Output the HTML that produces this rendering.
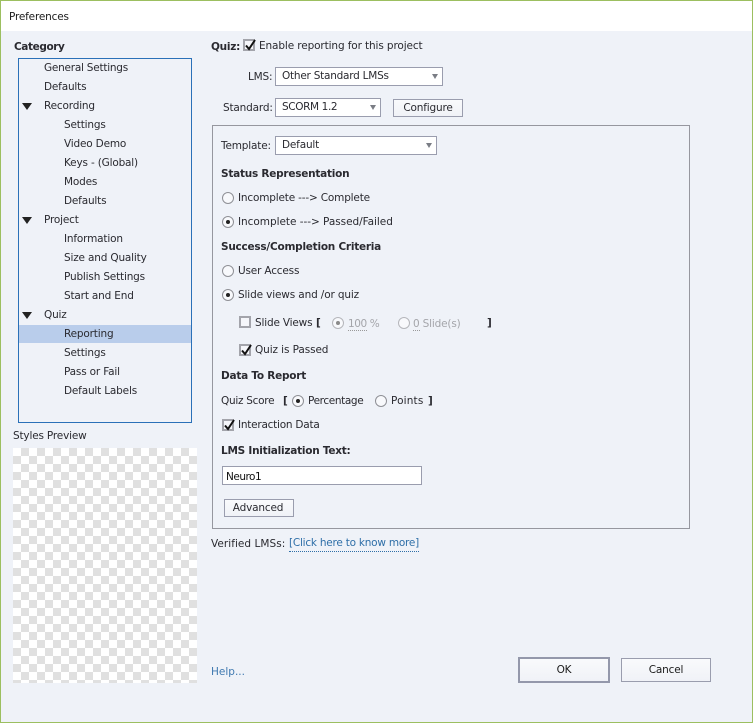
<!DOCTYPE html>
<html><head><meta charset="utf-8"><style>
html,body{margin:0;padding:0}
body{width:753px;height:723px;overflow:hidden;position:relative;background:#eff2f8;font-family:"DejaVu Sans",sans-serif;font-size:10.5px;color:#2a2a30}
.t{position:absolute;white-space:nowrap;line-height:14px;letter-spacing:-.18px;margin-top:1px}
.b{font-weight:bold;letter-spacing:-.24px}
.box{position:absolute;box-sizing:border-box}
.dd{position:absolute;box-sizing:border-box;background:#fff;border:1px solid #9a9dae;height:19px}
.dd:after{content:"";position:absolute;right:4px;top:6px;border-left:3.5px solid transparent;border-right:3.5px solid transparent;border-top:5px solid #7a7d85}
.dd.noa:after{display:none}
.btn{position:absolute;box-sizing:border-box;border:1px solid #9a9dae;background:linear-gradient(#f9fafc,#f0f2f7);text-align:center;letter-spacing:-.18px}
.cb{position:absolute;width:12px;height:12px;box-sizing:border-box;border:2px solid #a3a4ab;background:#f5f6fa}
.cb svg{position:absolute;left:-2px;top:-4px}
.r{position:absolute;width:12px;height:12px;box-sizing:border-box;border:1px solid #8f9096;border-radius:50%;background:#f8f9fc}
.r.on:after{content:"";position:absolute;left:3px;top:3px;width:4px;height:4px;border-radius:50%;background:#222}
.r.dis{border-color:#b5b6bb}
.r.dis.on:after{background:#8a8a8a}
.tri{position:absolute;border-left:5px solid transparent;border-right:5px solid transparent;border-top:7px solid #222;left:22px}
.g{color:#a4a5aa}
</style></head><body>
<div class="box" style="left:0;top:0;width:753px;height:31px;background:#fff"></div>
<div class="box" style="left:0;top:0;width:753px;height:723px;border:1px solid #9cbf60"></div>
<div class="t" style="left:9px;top:9px;color:#1a1a1a">Preferences</div>

<div class="t b" style="left:14px;top:39px;letter-spacing:-.4px">Category</div>
<div class="box" style="left:18px;top:58px;width:174px;height:365px;border:1px solid #2a70b8"></div>
<div class="box" style="left:19px;top:325px;width:172px;height:18px;background:#b9cdeb"></div>
<div class="t" style="left:44px;top:60px;letter-spacing:-.24px">General Settings</div>
<div class="t" style="left:44px;top:79px">Defaults</div>
<div class="tri" style="top:103px"></div>
<div class="t" style="left:44px;top:98px">Recording</div>
<div class="t" style="left:64px;top:117px">Settings</div>
<div class="t" style="left:64px;top:136px">Video Demo</div>
<div class="t" style="left:64px;top:155px">Keys - (Global)</div>
<div class="t" style="left:64px;top:174px">Modes</div>
<div class="t" style="left:64px;top:193px">Defaults</div>
<div class="tri" style="top:217px"></div>
<div class="t" style="left:44px;top:212px">Project</div>
<div class="t" style="left:64px;top:231px">Information</div>
<div class="t" style="left:64px;top:250px">Size and Quality</div>
<div class="t" style="left:64px;top:269px">Publish Settings</div>
<div class="t" style="left:64px;top:288px">Start and End</div>
<div class="tri" style="top:312px"></div>
<div class="t" style="left:44px;top:307px">Quiz</div>
<div class="t" style="left:64px;top:326px">Reporting</div>
<div class="t" style="left:64px;top:345px">Settings</div>
<div class="t" style="left:64px;top:364px">Pass or Fail</div>
<div class="t" style="left:64px;top:383px">Default Labels</div>

<div class="t" style="left:13px;top:428px">Styles Preview</div>
<div class="box" style="left:13px;top:448px;width:184px;height:235px;background-color:#fff;background-image:conic-gradient(#e0e0e0 25%,#fff 0 50%,#e0e0e0 0 75%,#fff 0);background-size:16px 16px;background-position:0 0"></div>

<div class="t b" style="left:211px;top:39px">Quiz:</div>
<div class="cb" style="left:243px;top:39px"><svg width="14" height="14" viewBox="0 0 14 14"><path d="M3 8.5 L6 12 L12 3" fill="none" stroke="#111" stroke-width="2"/></svg></div>
<div class="t" style="left:259px;top:38px;letter-spacing:-.12px">Enable reporting for this project</div>

<div class="t" style="left:248px;top:69px">LMS:</div>
<div class="dd" style="left:275px;top:67px;width:168px"><span class="t" style="left:6px;top:0;letter-spacing:-.24px">Other Standard LMSs</span></div>
<div class="t" style="left:223px;top:100px">Standard:</div>
<div class="dd" style="left:275px;top:98px;width:106px"><span class="t" style="left:6px;top:0;letter-spacing:-.38px">SCORM 1.2</span></div>
<div class="btn" style="left:393px;top:99px;width:70px;height:18px;line-height:16px">Configure</div>

<div class="box" style="left:212px;top:125px;width:478px;height:404px;border:1px solid #96979f"></div>
<div class="t" style="left:221px;top:138px">Template:</div>
<div class="dd" style="left:275px;top:136px;width:162px"><span class="t" style="left:6px;top:0">Default</span></div>

<div class="t b" style="left:221px;top:166px">Status Representation</div>
<div class="r" style="left:222px;top:192px"></div>
<div class="t" style="left:238px;top:190px">Incomplete ---&gt; Complete</div>
<div class="r on" style="left:222px;top:216px"></div>
<div class="t" style="left:238px;top:214px;letter-spacing:-.04px">Incomplete ---&gt; Passed/Failed</div>

<div class="t b" style="left:221px;top:239px">Success/Completion Criteria</div>
<div class="r" style="left:222px;top:265px"></div>
<div class="t" style="left:238px;top:263px">User Access</div>
<div class="r on" style="left:222px;top:289px"></div>
<div class="t" style="left:238px;top:287px;letter-spacing:-.14px">Slide views and /or quiz</div>

<div class="cb" style="left:239px;top:316px"></div>
<div class="t" style="left:255px;top:315px">Slide Views</div>
<div class="t b" style="left:316px;top:315px">[</div>
<div class="r on dis" style="left:332px;top:317px"></div>
<div class="t g" style="left:348px;top:316px;letter-spacing:-.4px"><span style="border-bottom:1px dotted #999">100</span> %</div>
<div class="r dis" style="left:398px;top:317px"></div>
<div class="t g" style="left:413px;top:316px"><span style="border-bottom:1px dotted #999">0</span> Slide(s)</div>
<div class="t b" style="left:487px;top:315px">]</div>

<div class="cb" style="left:239px;top:344px"><svg width="14" height="14" viewBox="0 0 14 14"><path d="M3 8.5 L6 12 L12 3" fill="none" stroke="#111" stroke-width="2"/></svg></div>
<div class="t" style="left:255px;top:342px;letter-spacing:-.1px">Quiz is Passed</div>

<div class="t b" style="left:221px;top:368px">Data To Report</div>
<div class="t" style="left:221px;top:393px;letter-spacing:-.28px">Quiz Score</div>
<div class="t b" style="left:283px;top:393px">[</div>
<div class="r on" style="left:292px;top:395px"></div>
<div class="t" style="left:308px;top:393px;letter-spacing:-.38px">Percentage</div>
<div class="r" style="left:375px;top:395px"></div>
<div class="t" style="left:391px;top:393px;letter-spacing:.15px">Points</div>
<div class="t b" style="left:428px;top:393px">]</div>
<div class="cb" style="left:222px;top:419px"><svg width="14" height="14" viewBox="0 0 14 14"><path d="M3 8.5 L6 12 L12 3" fill="none" stroke="#111" stroke-width="2"/></svg></div>
<div class="t" style="left:238px;top:417px;letter-spacing:-.24px">Interaction Data</div>

<div class="t b" style="left:221px;top:443px">LMS Initialization Text:</div>
<div class="dd noa" style="left:222px;top:466px;width:200px"></div>
<div class="t" style="left:226px;top:469px;color:#111;letter-spacing:-.5px">Neuro1</div>
<div class="btn" style="left:224px;top:499px;width:70px;height:18px;line-height:16px;padding-right:2px">Advanced</div>

<div class="t" style="left:211px;top:536px;letter-spacing:.04px">Verified LMSs:</div>
<div class="t" style="left:289px;top:536px;color:#2f6fa8;border-bottom:1px dotted #2f6fa8;line-height:13px;padding-bottom:1px;letter-spacing:-.23px">[Click here to know more]</div>
<div class="t" style="left:211px;top:664px;color:#3f79b0;letter-spacing:0">Help...</div>

<div class="btn" style="left:518px;top:657px;width:92px;height:26px;border:2px solid #9498ab;line-height:23px;color:#1a1a1a">OK</div>
<div class="btn" style="left:621px;top:658px;width:90px;height:24px;line-height:22px;color:#1a1a1a">Cancel</div>
</body></html>
